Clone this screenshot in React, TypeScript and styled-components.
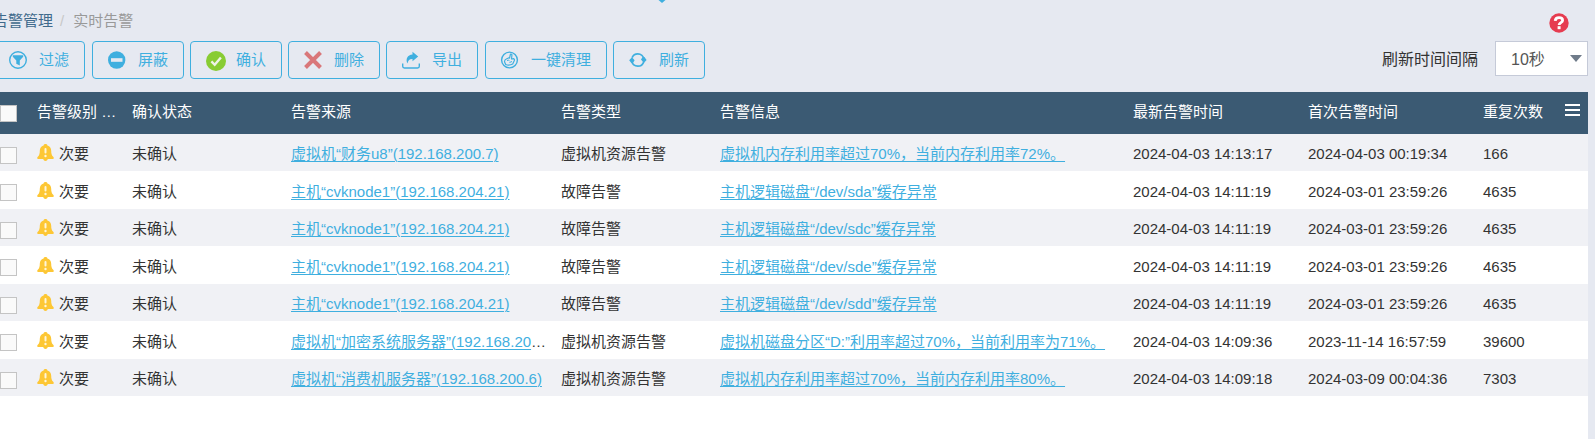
import React from 'react';
import styled, { createGlobalStyle } from 'styled-components';

const GlobalStyle = createGlobalStyle`
  * { box-sizing: border-box; }
  body {
    margin: 0;
    background: #e6e9f1;
    color: #333;
    font-family: "Liberation Sans", "Noto Sans CJK SC", sans-serif;
    font-size: 15px;
    line-height: 20px;
  }
  button, select, input { font: inherit; margin: 0; }
`;

const Page = styled.div`
  display: flex;
  flex-direction: column;
  min-height: 100vh;
  padding-right: 7px;
`;

const MenuPointer = styled.svg`
  position: absolute;
  top: 0;
  left: 658px;
  width: 8px;
  height: 3px;
`;

const TopBar = styled.header`
  display: flex;
  justify-content: space-between;
  height: 41px;
  padding: 11px 19px 0 0;
`;

const Breadcrumb = styled.nav`
  display: flex;
  gap: 7px;
  margin-left: -7px;
  white-space: nowrap;
`;

const CrumbLink = styled.a`
  color: #3f6a8c;
  text-decoration: none;
`;

const CrumbSeparator = styled.span`
  color: #c8c8c8;
`;

const CrumbCurrent = styled.span`
  margin-left: 2px;
  color: #999;
`;

const IconButton = styled.button`
  display: flex;
  align-items: center;
  justify-content: center;
  height: 20px;
  padding: 0;
  border: 0;
  background: none;
  cursor: pointer;
`;

const HelpButton = styled(IconButton)`
  margin-top: 2px;
`;

const Toolbar = styled.div`
  display: flex;
  justify-content: space-between;
  align-items: flex-start;
  height: 51px;
`;

const Actions = styled.div`
  display: flex;
  gap: 7px;
  margin-left: -7px;
`;

const ActionGroup = styled.div`
  display: flex;
  gap: 6px;
`;

const ActionButton = styled.button`
  display: flex;
  align-items: center;
  gap: 11px;
  height: 38px;
  padding: 0 15px 0 14px;
  border: 1px solid #3fafdf;
  border-radius: 4px;
  background: transparent;
  color: #3fafdf;
  white-space: nowrap;
  cursor: pointer;
`;

const Interval = styled.div`
  display: flex;
  align-items: center;
  gap: 17px;
  font-size: 16px;
  white-space: nowrap;
`;

const IntervalLabel = styled.label`
  padding-top: 2px;
`;

const SelectBox = styled.div`
  position: relative;
`;

const Select = styled.select`
  display: block;
  appearance: none;
  width: 93px;
  height: 35px;
  padding: 2px 24px 0 15px;
  border: 1px solid #c5cad8;
  border-radius: 0;
  background: #fff;
  color: #555;
`;

const SelectArrow = styled.svg`
  position: absolute;
  top: 14px;
  right: 6px;
  pointer-events: none;
`;

const Panel = styled.main`
  flex: 1;
  background: #fff;
`;

const Table = styled.table`
  width: 100%;
  table-layout: fixed;
  border-collapse: collapse;
`;

const Col = styled.col<{ $width?: number }>`
  width: ${(p) => (p.$width ? `${p.$width}px` : 'auto')};
`;

const HeadRow = styled.tr`
  height: 42px;
  background: #3b5a73;
  color: #fff;
`;

const HeadCell = styled.th`
  padding: 0 8px 2px;
  overflow: hidden;
  font-weight: 400;
  text-align: left;
  white-space: nowrap;
`;

const HeadTools = styled.div`
  display: flex;
  align-items: center;
  justify-content: space-between;
`;

const Row = styled.tr`
  height: 37px;
  background: #f0f1f5;
  &:nth-child(even) {
    height: 38px;
    background: #fff;
  }
`;

const Cell = styled.td`
  padding: 3px 4px 0 8px;
  overflow: hidden;
  text-overflow: ellipsis;
  white-space: nowrap;
`;

const CheckHead = styled.th`
  padding: 1px 0 0;
`;

const CheckCell = styled.td`
  padding: 5px 0 0;
`;

const Checkbox = styled.input`
  display: block;
  appearance: none;
  width: 17px;
  height: 17px;
  border: 1px solid #c4c4c4;
  background: #fafafa;
`;

const Level = styled.span`
  display: flex;
  align-items: flex-start;
  gap: 5px;
`;

const AlarmLink = styled.a`
  color: #3fafdf;
  text-decoration: underline;
  text-decoration-thickness: 1px;
  text-underline-offset: 2px;
`;

const BLUE = '#3fafdf';

const FilterIcon = () => (
  <svg width="20" height="20" viewBox="0 0 20 20" aria-hidden="true">
    <circle cx="10" cy="10" r="8.3" fill="none" stroke={BLUE} strokeWidth="1.4" />
    <path d="M4.8 5.2h10.4v1.6L11.8 10.500v4.900L8.300 13.800v-3.300L4.800 6.800z" fill={BLUE} />
  </svg>
);

const ShieldIcon = () => (
  <svg width="20" height="20" viewBox="0 0 20 20" aria-hidden="true">
    <circle cx="9.700" cy="10" r="8.700" fill={BLUE} />
    <rect x="4" y="8.200" width="11.500" height="3.600" fill="#e6e9f1" />
  </svg>
);

const ConfirmIcon = () => (
  <svg width="20" height="20" viewBox="0 0 20 20" overflow="visible" aria-hidden="true">
    <circle cx="11" cy="11" r="10" fill="#8c3" />
    <path d="M6.400 11.400l3.300 3.400 6.200-7.400" fill="none" stroke="#eef3e6" strokeWidth="2.400" />
  </svg>
);

const DeleteIcon = () => (
  <svg width="20" height="20" viewBox="0 0 20 20" aria-hidden="true">
    <path d="M2.500 2.500l15 15M17.500 2.500l-15 15" stroke="#d9777a" strokeWidth="4" />
  </svg>
);

const ExportIcon = () => (
  <svg width="20" height="20" viewBox="0 0 20 20" aria-hidden="true">
    <path d="M1.700 13.500v2.800q0 1.700 1.700 1.700h13.200q1.700 0 1.700-1.700V13.500" fill="none" stroke={BLUE} strokeWidth="1.400" />
    <path d="M11.500 1.700l5.700 4.800-5.700 4.800V8.900C8.500 8.800 7.200 10 6.500 13.500 4.300 9 6.500 4.700 11.500 4.400z" fill={BLUE} />
  </svg>
);

const CleanIcon = () => (
  <svg width="20" height="20" viewBox="0 0 20 20" fill="none" stroke={BLUE} strokeLinejoin="round" aria-hidden="true">
    <circle cx="9.500" cy="10" r="7.900" strokeWidth="1.400" />
    <path
      d="M9.500 8.200l1-4.200q1.500-.2 1.400 1.200l-.4 3.800 2.300-.3q1.200.8.2 2.600l-1.300 2.700q-3.500 1.800-7 .5l-1.200-2.800q0-2 1.800-2.700l2.700-1.300z"
      strokeWidth="1.200"
    />
    <path d="M7 10.500q1.500-.8 2.500.3M9.500 12.500l2.500-1" strokeWidth="1" />
  </svg>
);

const RefreshIcon = () => (
  <svg width="20" height="20" viewBox="0 0 20 20" aria-hidden="true">
    <circle cx="9.800" cy="10" r="6.200" fill="none" stroke={BLUE} strokeWidth="1.700" strokeDasharray="15.500 3.980" strokeDashoffset="-2" />
    <path d="M1.200 10.300L4 7.200l2.600 3-1.600 2.800H3.300zM13 9.500L14.600 7h1.800l2.200 3-2.800 3z" fill={BLUE} />
  </svg>
);

const BellIcon = () => (
  <svg width="17" height="18" viewBox="0 0 17 18" aria-hidden="true">
    <path
      d="M8.500 0c1.200 0 1.800.6 1.900 1.400 2.600.8 3.800 2.800 3.800 5.300 0 3 .5 4.600 2 6 .9.800.7 2.300-.6 2.300h-4.800c-.3 1.300-1.200 2-2.300 2s-2-.7-2.300-2H1.400c-1.300 0-1.500-1.500-.6-2.300 1.500-1.400 2-3 2-6 0-2.500 1.200-4.500 3.800-5.300C6.700.6 7.300 0 8.500 0z"
      fill="#fdc735"
    />
    <rect x="7.500" y="4" width="2" height="5.500" rx="1" fill="#fff6da" />
    <circle cx="8.500" cy="12" r="1.200" fill="#fff6da" />
  </svg>
);

const actionGroups = [
  [{ label: '过滤', Icon: FilterIcon }],
  [
    { label: '屏蔽', Icon: ShieldIcon },
    { label: '确认', Icon: ConfirmIcon },
    { label: '删除', Icon: DeleteIcon },
    { label: '导出', Icon: ExportIcon },
  ],
  [
    { label: '一键清理', Icon: CleanIcon },
    { label: '刷新', Icon: RefreshIcon },
  ],
];

interface Alarm {
  source: string;
  type: string;
  info: string;
  latest: string;
  first: string;
  count: number;
}

const alarms: Alarm[] = [
  { source: '虚拟机“财务u8”(192.168.200.7)', type: '虚拟机资源告警', info: '虚拟机内存利用率超过70%，当前内存利用率72%。', latest: '2024-04-03 14:13:17', first: '2024-04-03 00:19:34', count: 166 },
  { source: '主机“cvknode1”(192.168.204.21)', type: '故障告警', info: '主机逻辑磁盘“/dev/sda”缓存异常', latest: '2024-04-03 14:11:19', first: '2024-03-01 23:59:26', count: 4635 },
  { source: '主机“cvknode1”(192.168.204.21)', type: '故障告警', info: '主机逻辑磁盘“/dev/sdc”缓存异常', latest: '2024-04-03 14:11:19', first: '2024-03-01 23:59:26', count: 4635 },
  { source: '主机“cvknode1”(192.168.204.21)', type: '故障告警', info: '主机逻辑磁盘“/dev/sde”缓存异常', latest: '2024-04-03 14:11:19', first: '2024-03-01 23:59:26', count: 4635 },
  { source: '主机“cvknode1”(192.168.204.21)', type: '故障告警', info: '主机逻辑磁盘“/dev/sdd”缓存异常', latest: '2024-04-03 14:11:19', first: '2024-03-01 23:59:26', count: 4635 },
  { source: '虚拟机“加密系统服务器”(192.168.200.5)', type: '虚拟机资源告警', info: '虚拟机磁盘分区“D:”利用率超过70%，当前利用率为71%。', latest: '2024-04-03 14:09:36', first: '2023-11-14 16:57:59', count: 39600 },
  { source: '虚拟机“消费机服务器”(192.168.200.6)', type: '虚拟机资源告警', info: '虚拟机内存利用率超过70%，当前内存利用率80%。', latest: '2024-04-03 14:09:18', first: '2024-03-09 00:04:36', count: 7303 },
];

export default function App() {
  return (
    <Page>
      <GlobalStyle />
      <MenuPointer viewBox="0 0 8 3" aria-hidden="true">
        <path d="M0.500 0h7L4 3z" fill={BLUE} />
      </MenuPointer>
      <TopBar>
        <Breadcrumb>
          <CrumbLink href="#alarms">告警管理</CrumbLink>
          <CrumbSeparator>/</CrumbSeparator>
          <CrumbCurrent>实时告警</CrumbCurrent>
        </Breadcrumb>
        <HelpButton type="button" aria-label="帮助">
          <svg width="20" height="20" viewBox="0 0 20 20" aria-hidden="true">
            <circle cx="10" cy="10" r="9.700" fill="#e63c50" />
            <path d="M6.200 7.900c.2-2.100 1.700-3.200 3.800-3.200 2.200 0 3.600 1 3.600 2.700 0 2.300-3.500 2.200-3.500 4.600" fill="none" stroke="#fff" strokeWidth="2.800" />
            <rect x="8.600" y="13.200" width="3" height="3" fill="#fff" />
          </svg>
        </HelpButton>
      </TopBar>
      <Toolbar>
        <Actions>
          {actionGroups.map((group) => (
            <ActionGroup key={group[0].label}>
              {group.map(({ label, Icon }) => (
                <ActionButton type="button" key={label}>
                  <Icon />
                  {label}
                </ActionButton>
              ))}
            </ActionGroup>
          ))}
        </Actions>
        <Interval>
          <IntervalLabel htmlFor="interval">刷新时间间隔</IntervalLabel>
          <SelectBox>
            <Select id="interval" defaultValue="10">
              <option value="10">10秒</option>
            </Select>
            <SelectArrow width="12" height="7" viewBox="0 0 12 7" aria-hidden="true">
              <path d="M0 0h12L6 7z" fill="#6f7b8a" />
            </SelectArrow>
          </SelectBox>
        </Interval>
      </Toolbar>
      <Panel>
        <Table>
          <colgroup>
            <Col $width={29} />
            <Col $width={95} />
            <Col $width={159} />
            <Col $width={270} />
            <Col $width={159} />
            <Col />
            <Col $width={175} />
            <Col $width={175} />
            <Col $width={113} />
          </colgroup>
          <thead>
            <HeadRow>
              <CheckHead>
                <Checkbox type="checkbox" aria-label="全选" />
              </CheckHead>
              <HeadCell>告警级别 …</HeadCell>
              <HeadCell>确认状态</HeadCell>
              <HeadCell>告警来源</HeadCell>
              <HeadCell>告警类型</HeadCell>
              <HeadCell>告警信息</HeadCell>
              <HeadCell>最新告警时间</HeadCell>
              <HeadCell>首次告警时间</HeadCell>
              <HeadCell>
                <HeadTools>
                  重复次数
                  <IconButton type="button" aria-label="列设置">
                    <svg width="15" height="16" viewBox="0 0 15 16" aria-hidden="true">
                      <path d="M0 1h15M0 6h15M0 11h15" stroke="#fff" strokeWidth="2" />
                    </svg>
                  </IconButton>
                </HeadTools>
              </HeadCell>
            </HeadRow>
          </thead>
          <tbody>
            {alarms.map((alarm, index) => (
              <Row key={index}>
                <CheckCell>
                  <Checkbox type="checkbox" aria-label={alarm.info} />
                </CheckCell>
                <Cell>
                  <Level>
                    <BellIcon />
                    次要
                  </Level>
                </Cell>
                <Cell>未确认</Cell>
                <Cell>
                  <AlarmLink href="#source">{alarm.source}</AlarmLink>
                </Cell>
                <Cell>{alarm.type}</Cell>
                <Cell>
                  <AlarmLink href="#info">{alarm.info}</AlarmLink>
                </Cell>
                <Cell>{alarm.latest}</Cell>
                <Cell>{alarm.first}</Cell>
                <Cell>{alarm.count}</Cell>
              </Row>
            ))}
          </tbody>
        </Table>
      </Panel>
    </Page>
  );
}
